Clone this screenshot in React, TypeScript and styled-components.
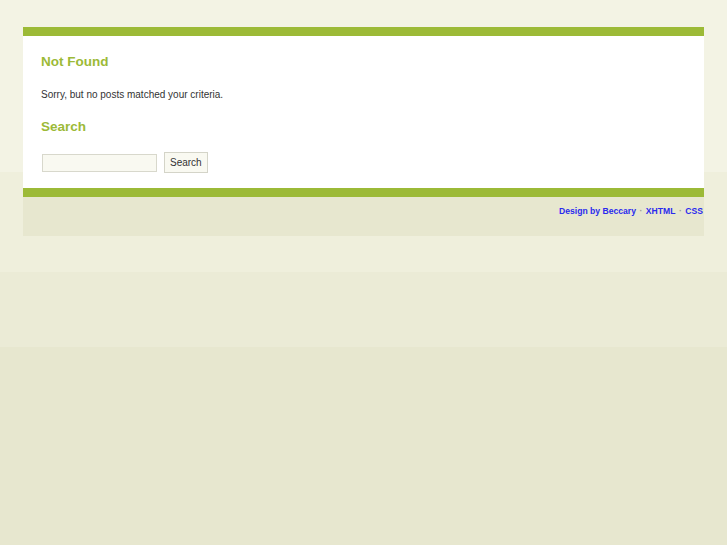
import React from 'react';
import styled, { createGlobalStyle } from 'styled-components';

const GlobalStyle = createGlobalStyle`
  html, body {
    margin: 0;
    padding: 0;
  }
  body {
    min-height: 545px;
    font-family: "Liberation Sans", Arial, sans-serif;
    background: linear-gradient(
      to bottom,
      #f3f3e4 0,
      #f3f3e4 172px,
      #efefdc 172px,
      #efefdc 272px,
      #ebebd6 272px,
      #ebebd6 347px,
      #e7e7cf 347px
    );
  }
`;

const Page = styled.div`
  padding: 27px 23px 0 23px;
`;

const Wrapper = styled.div`
  width: 681px;
`;

const Content = styled.div`
  background: #ffffff;
  border-top: 9px solid #9cba37;
  border-bottom: 9px solid #9cba37;
  padding: 18px 18px 15px 18px;
`;

const Heading = styled.h2`
  margin: 0;
  font-size: 13.5px;
  font-weight: bold;
  color: #9cba37;
  line-height: 16px;
`;

const Text = styled.p`
  margin: 18px 0 18px 0;
  font-size: 10px;
  color: #333333;
  line-height: 13px;
`;

const SearchForm = styled.form`
  display: flex;
  align-items: center;
  gap: 7px;
  margin: 17px 0 0 1px;
`;

const SearchInput = styled.input`
  width: 111px;
  height: 14px;
  padding: 1px;
  border: 1px solid #d8d8cc;
  background: #f9f9f1;
  font-family: "Liberation Sans", Arial, sans-serif;
  font-size: 10px;
  outline: none;
`;

const SearchButton = styled.button`
  height: 21px;
  padding: 0 5px;
  border: 1px solid #d4d4c8;
  background: #f9f9f1;
  color: #333333;
  font-family: "Liberation Sans", Arial, sans-serif;
  font-size: 10px;
`;

const Footer = styled.div`
  background: #e7e7cf;
  height: 39px;
  padding: 9px 1px 0 0;
  box-sizing: border-box;
  text-align: right;
  font-size: 8.6px;
  font-weight: bold;
  color: #999999;
`;

const FooterLink = styled.a`
  color: #2a2aee;
  text-decoration: none;
`;

const Dot = styled.span`
  margin: 0 3.5px;
`;

export default function App() {
  return (
    <>
      <GlobalStyle />
      <Page>
        <Wrapper>
          <Content>
            <Heading>Not Found</Heading>
            <Text>Sorry, but no posts matched your criteria.</Text>
            <Heading>Search</Heading>
            <SearchForm onSubmit={(e) => e.preventDefault()}>
              <SearchInput type="text" />
              <SearchButton type="submit">Search</SearchButton>
            </SearchForm>
          </Content>
          <Footer>
            <FooterLink href="#">Design by Beccary</FooterLink>
            <Dot>·</Dot>
            <FooterLink href="#">XHTML</FooterLink>
            <Dot>·</Dot>
            <FooterLink href="#">CSS</FooterLink>
          </Footer>
        </Wrapper>
      </Page>
    </>
  );
}
